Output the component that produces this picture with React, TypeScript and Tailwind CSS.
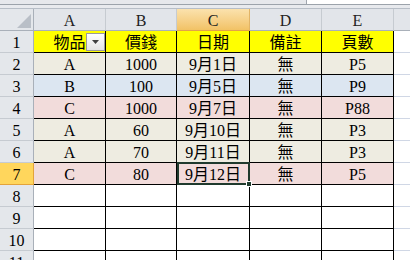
import React from "react";

const font = "font-['Liberation_Serif','Noto_Sans_CJK_TC',serif]";

const rows = [
  ["A", "1000", "9月1日", "無", "P5"],
  ["B", "100", "9月5日", "無", "P9"],
  ["C", "1000", "9月7日", "無", "P88"],
  ["A", "60", "9月10日", "無", "P3"],
  ["A", "70", "9月11日", "無", "P3"],
  ["C", "80", "9月12日", "無", "P5"],
];

const fills: Record<string, string> = {
  A: "bg-[#eeece1]",
  B: "bg-[#dce6f1]",
  C: "bg-[#f2dcdb]",
};

const widths = ["w-[72px]", "w-[71px]", "w-[73px]", "w-[72px]", "w-[72px]"];
const letters = ["A", "B", "C", "D", "E"];
const titles = ["物品", "價錢", "日期", "備註", "頁數"];

function RowHead({ n, active }: { n: number; active?: boolean }) {
  return (
    <div
      className={
        "flex w-[34px] shrink-0 items-center justify-center border-r border-b pt-[2px] " +
        (active
          ? "border-r-[#e3a33a] border-b-[#e3a33a] bg-[#ffd65c]"
          : "border-r-[#a9b0b9] border-b-[#c6cbd1] bg-[#e4e7eb]")
      }
    >
      {n}
    </div>
  );
}

function FilterButton() {
  return (
    <div className="absolute right-0 top-[2px] flex h-[18px] w-[19px] items-center justify-center border border-[#9a9a9a] bg-gradient-to-b from-white to-[#e4e4e4]">
      <svg width="7" height="4" viewBox="0 0 7 4">
        <polygon points="0,0 7,0 3.5,4" fill="#404040" />
      </svg>
    </div>
  );
}

function Selection() {
  return (
    <div className="absolute -top-px left-0 -right-px -bottom-px z-10 border-2 border-[#1f3a2d]">
      <div className="absolute -bottom-[4px] -right-[4px] h-[6px] w-[6px] border border-white bg-[#1f3a2d]" />
    </div>
  );
}

export default function App() {
  return (
    <div className={"h-[260px] w-[410px] overflow-hidden bg-white text-[16px] leading-none text-black " + font}>
      <div className="flex h-[4px]">
        <div className="w-[306px] bg-[#e6e8ec]" />
        <div className="w-px bg-[#a0a6ae]" />
        <div className="flex-1 bg-white" />
      </div>
      <div className="h-px bg-[#9ca3ab]" />
      <div className="h-[3px] bg-[#e8eaee]" />
      <div className="h-px bg-[#b7bec7]" />

      {/* column headers */}
      <div className="flex h-[22px] text-[#222]">
        <div className="flex w-[34px] shrink-0 items-end justify-end border-r border-b border-r-[#a9b0b9] border-b-[#a9b0b9] bg-[#e4e7eb] p-[2px]">
          <svg width="14" height="14" viewBox="0 0 14 14">
            <polygon points="14,0 14,14 0,14" fill="#b9bfc7" />
          </svg>
        </div>
        {letters.map((l, i) => (
          <div
            key={l}
            className={
              widths[i] +
              " flex shrink-0 items-center justify-center border-r border-b pt-[3px] " +
              (l === "C"
                ? "border-r-[#e2b466] border-b-[#e2a24a] bg-gradient-to-b from-[#fbe2ad] to-[#f2c265]"
                : "border-r-[#c6cbd1] border-b-[#a9b0b9] bg-[#e2e5ea]")
            }
          >
            {l}
          </div>
        ))}
        <div className="flex-1 border-b border-b-[#a9b0b9] bg-[#e2e5ea]" />
      </div>

      {/* row 1 titles */}
      <div className="flex h-[22px]">
        <RowHead n={1} />
        {titles.map((t, i) => (
          <div
            key={t}
            className={widths[i] + " relative flex shrink-0 items-center justify-center border-r border-b border-black bg-[#ffff00] pt-[2px]"}
          >
            {t}
            {i === 0 && <FilterButton />}
          </div>
        ))}
        <div className="flex-1 border-b border-[#d0d7e5]" />
      </div>

      {rows.map((r, ri) => (
        <div key={ri} className="flex h-[22px]">
          <RowHead n={ri + 2} active={ri === 5} />
          {r.map((v, ci) => (
            <div
              key={ci}
              className={
                widths[ci] +
                " relative flex shrink-0 items-center justify-center border-r border-b border-black pt-[2px] " +
                fills[r[0]]
              }
            >
              {v}
              {ri === 5 && ci === 2 && <Selection />}
            </div>
          ))}
          <div className="flex-1 border-b border-[#d0d7e5]" />
        </div>
      ))}

      {[8, 9, 10, 11].map((n) => (
        <div key={n} className="flex h-[22px]">
          <RowHead n={n} />
          {widths.map((w, ci) => (
            <div key={ci} className={w + " shrink-0 border-r border-b border-black bg-white"} />
          ))}
          <div className="flex-1 border-b border-[#d0d7e5]" />
        </div>
      ))}
    </div>
  );
}
